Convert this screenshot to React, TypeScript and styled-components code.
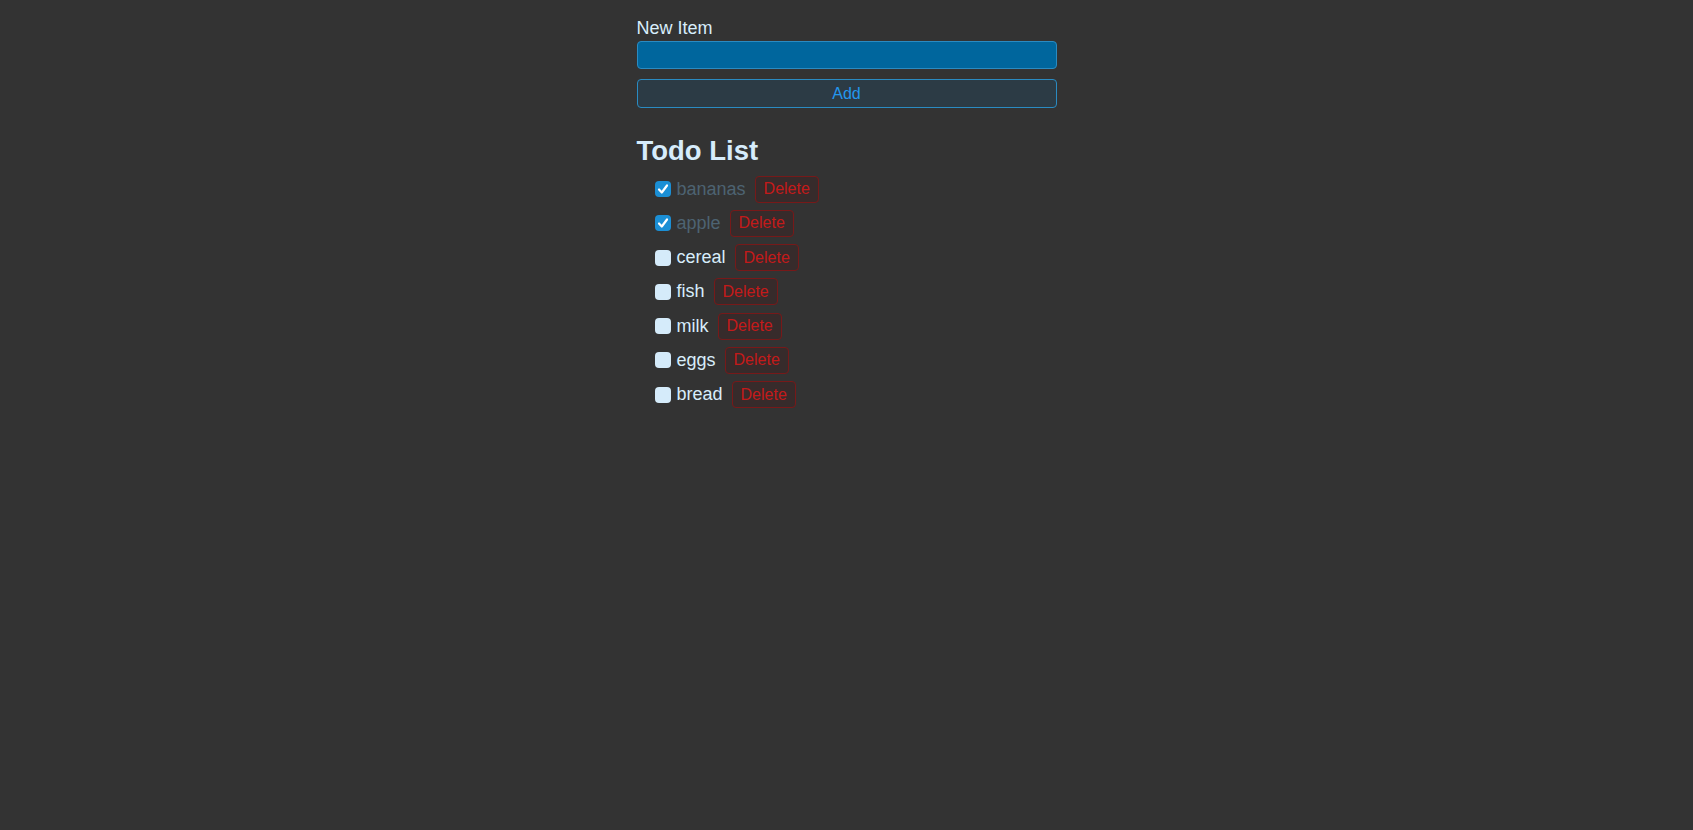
import { useState } from "react";
import styled, { createGlobalStyle } from "styled-components";

const GlobalStyle = createGlobalStyle`
  html, body {
    margin: 0;
    padding: 0;
    background: #333333;
    font-family: "Liberation Sans", Arial, sans-serif;
    color: #d8edfb;
  }
`;

const Page = styled.div`
  width: 420px;
  margin: 0 auto;
  padding-top: 18px;
`;

const Form = styled.form`
  display: flex;
  flex-direction: column;
`;

const Label = styled.label`
  font-size: 18px;
  line-height: 21px;
  margin-bottom: 2px;
`;

const Input = styled.input`
  box-sizing: border-box;
  height: 28px;
  width: 100%;
  background: #00669d;
  border: 1px solid #2a8bc2;
  border-radius: 4px;
  color: #fff;
  font-size: 16px;
  outline: none;
`;

const AddButton = styled.button`
  box-sizing: border-box;
  margin-top: 10px;
  height: 29px;
  width: 100%;
  background: #2c3b45;
  border: 1px solid #2a8bc2;
  border-radius: 4px;
  color: #2397ee;
  font-family: inherit;
  font-size: 16px;
  cursor: pointer;
`;

const Title = styled.h2`
  margin: 27px 0 6px;
  font-size: 27.5px;
  line-height: 31px;
  font-weight: bold;
  color: #d6ecfb;
`;

const List = styled.ul`
  list-style: none;
  margin: 0;
  padding: 0 0 0 18px;
`;

const Row = styled.li`
  display: flex;
  align-items: center;
  height: 34.25px;
`;

const CheckLabel = styled.label`
  display: flex;
  align-items: center;
`;

const Check = styled.span<{ $checked: boolean }>`
  box-sizing: border-box;
  width: 16px;
  height: 16px;
  border-radius: 4px;
  display: inline-flex;
  align-items: center;
  justify-content: center;
  background: ${(p) => (p.$checked ? "#1b8fd5" : "#d5ebfa")};
  margin-right: 6px;
  cursor: pointer;
`;

const HiddenBox = styled.input`
  display: none;
`;

const ItemText = styled.span<{ $done: boolean }>`
  font-size: 18px;
  color: ${(p) => (p.$done ? "#4d6372" : "#d8edfb")};
`;

const DeleteButton = styled.button`
  box-sizing: border-box;
  margin-left: 9px;
  height: 27px;
  padding: 0 8px;
  background: #372b2b;
  border: 1px solid #771919;
  border-radius: 4px;
  color: #c41a1a;
  font-family: inherit;
  font-size: 16px;
  cursor: pointer;
`;

interface ITodo {
  id: number;
  title: string;
  done: boolean;
}

const App = () => {
  const [text, setText] = useState("");
  const [todos, setTodos] = useState<ITodo[]>([
    { id: 1, title: "bananas", done: true },
    { id: 2, title: "apple", done: true },
    { id: 3, title: "cereal", done: false },
    { id: 4, title: "fish", done: false },
    { id: 5, title: "milk", done: false },
    { id: 6, title: "eggs", done: false },
    { id: 7, title: "bread", done: false },
  ]);

  const toggle = (id: number) =>
    setTodos(todos.map((t) => (t.id === id ? { ...t, done: !t.done } : t)));

  return (
    <>
      <GlobalStyle />
      <Page>
        <Form
          onSubmit={(e) => {
            e.preventDefault();
            if (!text) return;
            setTodos([...todos, { id: Date.now(), title: text, done: false }]);
            setText("");
          }}
        >
          <Label htmlFor="item">New Item</Label>
          <Input id="item" value={text} onChange={(e) => setText(e.target.value)} />
          <AddButton>Add</AddButton>
        </Form>
        <Title>Todo List</Title>
        <List>
          {todos.map((todo) => (
            <Row key={todo.id}>
              <CheckLabel>
                <HiddenBox
                  type="checkbox"
                  checked={todo.done}
                  onChange={() => toggle(todo.id)}
                />
                <Check $checked={todo.done}>
                  {todo.done && (
                    <svg width="12" height="12" viewBox="0 0 12 12">
                      <path
                        d="M2 6.5 L4.8 9.5 L10 2.5"
                        fill="none"
                        stroke="#fff"
                        strokeWidth="2.2"
                        strokeLinecap="round"
                        strokeLinejoin="round"
                      />
                    </svg>
                  )}
                </Check>
                <ItemText $done={todo.done}>{todo.title}</ItemText>
              </CheckLabel>
              <DeleteButton
                onClick={() => setTodos(todos.filter((t) => t.id !== todo.id))}
              >
                Delete
              </DeleteButton>
            </Row>
          ))}
        </List>
      </Page>
    </>
  );
};

export default App;
